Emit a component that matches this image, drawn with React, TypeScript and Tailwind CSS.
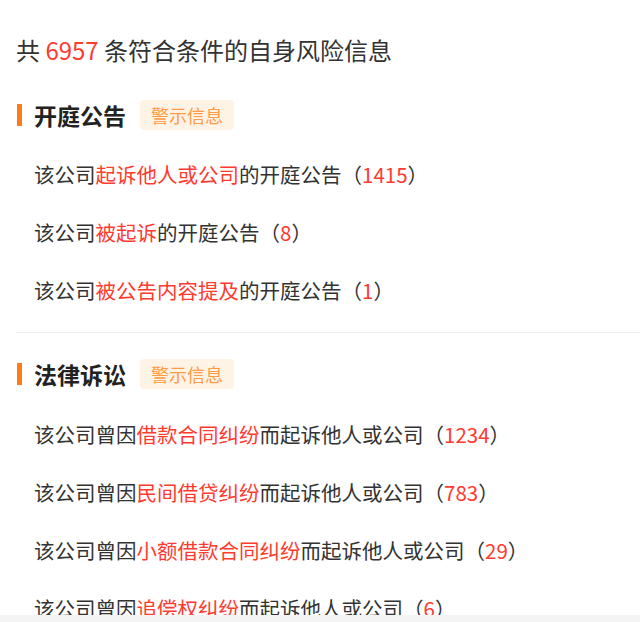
import React from "react";

type Row = { pre: string; red: string; post: string; n: string };

const sec1: Row[] = [
  { pre: "该公司", red: "起诉他人或公司", post: "的开庭公告", n: "1415" },
  { pre: "该公司", red: "被起诉", post: "的开庭公告", n: "8" },
  { pre: "该公司", red: "被公告内容提及", post: "的开庭公告", n: "1" },
];

const sec2: Row[] = [
  { pre: "该公司曾因", red: "借款合同纠纷", post: "而起诉他人或公司", n: "1234" },
  { pre: "该公司曾因", red: "民间借贷纠纷", post: "而起诉他人或公司", n: "783" },
  { pre: "该公司曾因", red: "小额借款合同纠纷", post: "而起诉他人或公司", n: "29" },
  { pre: "该公司曾因", red: "追偿权纠纷", post: "而起诉他人或公司", n: "6" },
];

function Header({ title }: { title: string }) {
  return (
    <div className="flex items-center h-[30px] pl-[17px]">
      <div className="w-[5px] h-[22px] bg-[#ff7a1a]" />
      <div className="ml-[12px] text-[23px] font-bold text-[#222] leading-[30px]">{title}</div>
      <div className="ml-[14px] h-[30px] px-[11px] rounded-[4px] bg-[#fff3e6] text-[#ff9b45] text-[18px] leading-[30px]">
        警示信息
      </div>
    </div>
  );
}

function Rows({ rows }: { rows: Row[] }) {
  return (
    <div className="flex flex-col">
      {rows.map((r, i) => (
        <div key={i} className="h-[58px] flex items-center pl-[34px] text-[20.5px] text-[#333] whitespace-nowrap">
          <span>{r.pre}</span>
          <span className="text-[#ff3a2f]">{r.red}</span>
          <span>{r.post}</span>
          <span>（</span>
          <span className="text-[#ff3a2f]">{r.n}</span>
          <span>）</span>
        </div>
      ))}
    </div>
  );
}

export default function App() {
  return (
    <div
      className="w-[640px] h-[622px] overflow-hidden bg-white relative"
      style={{ fontFamily: '"Noto Sans CJK SC", "Noto Sans", sans-serif' }}
    >
      <div className="pt-[32px] pl-[16px] text-[24px] leading-[36px] text-[#333] whitespace-nowrap">
        共 <span className="text-[#ff3a2f]">6957</span> 条符合条件的自身风险信息
      </div>
      <div className="mt-[32px]">
        <Header title="开庭公告" />
        <div className="mt-[15px]">
          <Rows rows={sec1} />
        </div>
      </div>
      <div className="mt-[13px] ml-[16px] h-px bg-[#eeeeee]" />
      <div className="mt-[26px]">
        <Header title="法律诉讼" />
        <div className="mt-[16px]">
          <Rows rows={sec2} />
        </div>
      </div>
      <div className="fixed left-0 right-0 bottom-0 h-[7px] bg-[#f4f4f4]" />
    </div>
  );
}
